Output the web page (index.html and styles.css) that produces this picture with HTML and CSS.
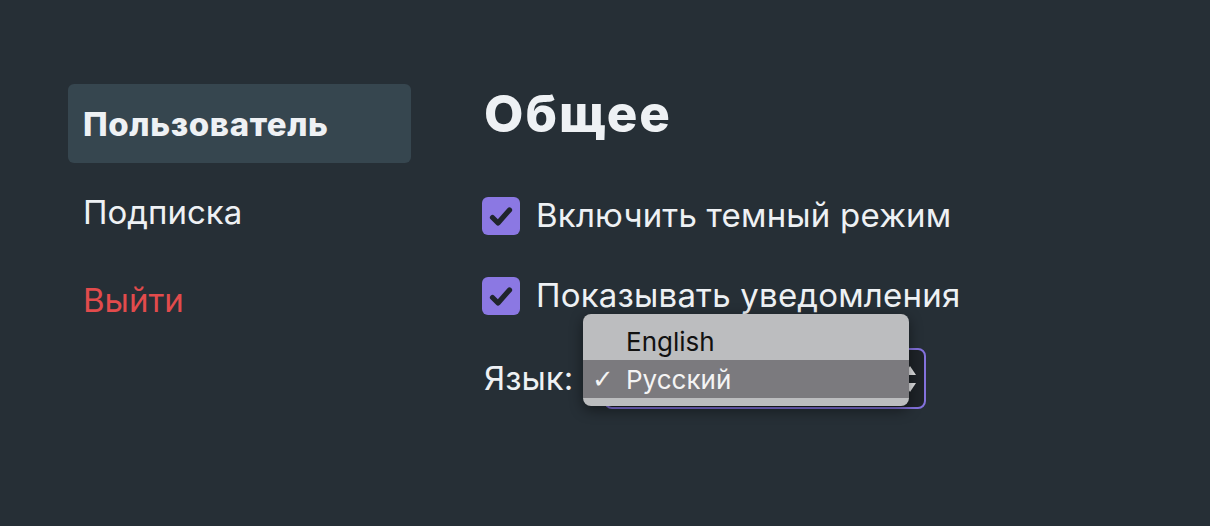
FILE: index.html
```html
<!DOCTYPE html>
<html lang="ru">
<head>
<meta charset="utf-8">
<title>Настройки</title>
<link rel="stylesheet" href="styles.css">
</head>
<body>
<div class="layout">
  <nav class="sidebar">
    <div class="nav-item active">Пользователь</div>
    <div class="nav-item">Подписка</div>
    <div class="nav-item danger">Выйти</div>
  </nav>
  <main class="content">
    <h1 class="title">Общее</h1>
    <div class="options">
      <label class="option">
        <span class="checkbox"><svg viewBox="0 0 38 38" width="38" height="38"><path d="M10.5 20.5 L16 26 L27.5 13" fill="none" stroke="#1f252c" stroke-width="5.2" stroke-linecap="round" stroke-linejoin="round"/></svg></span>
        <span class="option-text">Включить темный режим</span>
      </label>
      <label class="option">
        <span class="checkbox"><svg viewBox="0 0 38 38" width="38" height="38"><path d="M10.5 20.5 L16 26 L27.5 13" fill="none" stroke="#1f252c" stroke-width="5.2" stroke-linecap="round" stroke-linejoin="round"/></svg></span>
        <span class="option-text">Показывать уведомления</span>
      </label>
      <div class="lang-row">
        <span class="lang-label">Язык:</span>
        <div class="select-wrap">
          <div class="select">
            <span class="select-value">Русский</span>
            <svg class="select-arrows" viewBox="0 0 16 30" width="16" height="30"><path d="M8 2 L14 11 L2 11 Z" fill="#e3e4e6"/><path d="M8 28 L14 19 L2 19 Z" fill="#e3e4e6"/></svg>
          </div>
          <div class="menu">
            <div class="menu-item"><span class="menu-check"></span>English</div>
            <div class="menu-item selected"><span class="menu-check">✓</span>Русский</div>
          </div>
        </div>
      </div>
    </div>
  </main>
</div>
</body>
</html>
```

FILE: styles.css
```css
html, body {
  margin: 0;
  padding: 0;
}
body {
  background: #262f36;
  font-family: Inter, "Liberation Sans", Arial, sans-serif;
  color: #eef1f4;
  width: 1210px;
  height: 526px;
  overflow: hidden;
}
.layout {
  display: flex;
  padding: 84px 0 0 68px;
  gap: 73px;
}
.sidebar {
  width: 343px;
  display: flex;
  flex-direction: column;
  gap: 9px;
}
.nav-item {
  font-size: 33px;
  line-height: 32px;
  padding: 24px 15px 23px;
  border-radius: 6px;
  color: #eef1f4;
}
.nav-item.active {
  background: #36464f;
  font-weight: 800;
  letter-spacing: 0.6px;
}
.nav-item.danger {
  color: #e24b4c;
}
.content {
  display: flex;
  flex-direction: column;
}
.title {
  margin: 6px 0 0;
  font-size: 51px;
  line-height: 48px;
  font-weight: 800;
  letter-spacing: 2px;
  color: #eef1f4;
}
.options {
  margin-top: 58px;
  display: flex;
  flex-direction: column;
  gap: 41px;
}
.option {
  display: flex;
  align-items: center;
  gap: 16px;
  height: 39px;
  margin-left: -2px;
}
.checkbox {
  width: 38px;
  height: 38px;
  border-radius: 6px;
  background: #8b78e3;
  display: flex;
}
.option-text {
  font-size: 33px;
  line-height: 32px;
  padding-bottom: 2px;
  letter-spacing: 0.2px;
}
.lang-row {
  margin-top: -8px;
  display: flex;
  align-items: center;
  gap: 30px;
}
.lang-label {
  font-size: 33px;
  line-height: 32px;
  margin-top: -2px;
  width: 90px;
}
.select-wrap {
  position: relative;
}
.select {
  width: 290px;
  height: 57px;
  border: 2px solid #8371dc;
  border-radius: 8px;
  background: #1e2328;
  display: flex;
  align-items: center;
  justify-content: space-between;
  padding: 0 6px 0 22px;
  box-sizing: content-box;
}
.select-value {
  font-size: 26px;
  color: #eef1f4;
}
.select-arrows {
  display: block;
}
.menu {
  position: absolute;
  left: -21px;
  top: -34px;
  width: 326px;
  height: 92px;
  background: #bcbdbf;
  border-radius: 8px;
  box-shadow: 0 4px 14px rgba(0, 0, 0, 0.45);
  padding-top: 8px;
  box-sizing: border-box;
  font-size: 26px;
}
.menu-item {
  height: 38px;
  display: flex;
  align-items: center;
  color: #111111;
}
.menu-item.selected {
  background: #7b7a7e;
  color: #f4f4f4;
}
.menu-check {
  width: 43px;
  padding-left: 9px;
  box-sizing: border-box;
  font-family: "DejaVu Sans", sans-serif;
  font-size: 26px;
  font-weight: bold;
}
```
